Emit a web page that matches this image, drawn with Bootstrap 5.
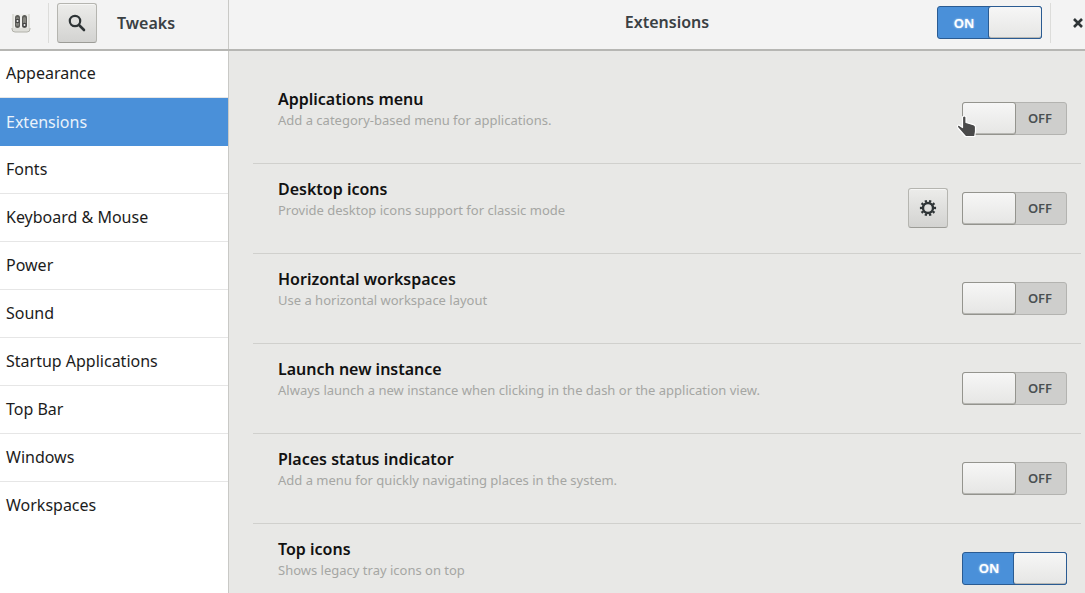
<!DOCTYPE html>
<html lang="en">
<head>
<meta charset="utf-8">
<meta name="viewport" content="width=device-width, initial-scale=1">
<title>Tweaks</title>
<link href="https://cdn.jsdelivr.net/npm/bootstrap@5.3.0/dist/css/bootstrap.min.css" rel="stylesheet">
<style>
  body { font-family: "Noto Sans", "Open Sans", sans-serif; font-size: 16px; line-height: 24px; color: #111; background: #e8e8e6; }
  .titlebar { height: 50px; background: #f3f3f3; border-bottom: 1px solid #b6b6b3; box-shadow: 0 1px 0 #b6b6b3; z-index: 1; }
  .side-col { width: 229px; border-right: 1px solid #c9c9c6; }
  .titlebar-row { padding-bottom: 4px; }
  .app-icon { width: 20px; margin: 0 17px 0 11px; }
  .win-title { font-size: 16px; font-weight: 600; color: #3a4043; }
  .page-title { padding-left: 168px; }
  .divider { width: 1px; height: 40px; background: #dcdcda; }
  .tool-btn { width: 40px; height: 40px; padding: 0; border: 1px solid #b5b5b0; border-bottom-color: #9c9c97; border-radius: 3px; background: linear-gradient(#ececea, #d3d3d1); box-shadow: inset 0 1px #f6f6f5; color: #2e3436; }
  .close-btn { color: #2e3436; }
  .side-list .list-group-item { height: 48px; padding: 11px 6px; line-height: 24px; color: #1c1c1c; border-color: #e6e6e6; }
  .side-list .list-group-item.active { background: #4a90d9; border-color: #4a90d9; color: #e9f2fb; margin-top: 0; }
  .page-pad { padding: 24px 4px 0 24px; }
  .ext-row { height: 90px; padding: 14px 14px 0 25px; border-bottom: 1px solid #d0d0cd; }
  .ext-name { font-size: 16px; font-weight: 600; line-height: 22px; color: #111; }
  .ext-desc { font-size: 13px; line-height: 20px; color: #a5a6a3; }
  .controls { gap: 14px; height: 60px; }
  .toggle { display: grid; width: 105px; height: 33px; cursor: pointer; }
  .toggle > * { grid-area: 1 / 1; }
  .toggle input { appearance: none; margin: 0; width: 105px; height: 33px; border: 1px solid #b3b3b0; border-radius: 3px; background: #cececc; position: relative; }
  .toggle input::after { content: ""; position: absolute; top: -1px; bottom: -1px; left: -1px; width: 54px; border: 1px solid #94948e; border-radius: 3px; background: linear-gradient(#f6f6f6, #e6e6e4); box-shadow: inset 0 -1px #b8b8b4; }
  .toggle input:checked { border-color: #2a5b92; background: #4a90d9; }
  .toggle input:checked::after { left: auto; right: -1px; border-color: #2a5b92; }
  .toggle .state { z-index: 1; align-self: center; pointer-events: none; width: 54px; text-align: center; font-size: 13px; font-weight: 600; line-height: 20px; }
  .state-on { display: none; justify-self: start; color: #fff; text-shadow: 0 0 2px #d5e6f8; }
  .state-off { justify-self: end; color: #4a5052; }
  .toggle input:checked ~ .state-on { display: block; }
  .toggle input:checked ~ .state-off { display: none; }
  .pointer { position: absolute; left: -6px; top: 12px; z-index: 2; pointer-events: none; }
</style>
</head>
<body class="vh-100 d-flex flex-column overflow-hidden">
<header class="titlebar d-flex flex-shrink-0 position-relative">
  <div class="side-col titlebar-row d-flex align-items-center flex-shrink-0">
    <svg class="app-icon flex-shrink-0" width="20" height="20" viewBox="0 0 20 20" aria-hidden="true">
      <path d="M1 1h18v15q0 3-3 3H4q-3 0-3-3z" fill="#deded9"/>
      <path d="M3 1h14v14H3z" fill="#efefec"/>
      <path d="M1 15v1q0 3 3 3h12q3 0 3-3v-1" fill="none" stroke="#b2b2aa"/>
      <rect x="4" y="2" width="5" height="13" rx="2.500" fill="#5c5c58"/><rect x="5" y="4" width="3" height="9" rx="1.500" fill="#85857f"/><circle cx="6.500" cy="8" r="2.200" fill="#444"/><circle cx="6.500" cy="8" r="1" fill="#eee"/>
      <rect x="11" y="2" width="5" height="13" rx="2.500" fill="#5c5c58"/><rect x="12" y="4" width="3" height="9" rx="1.500" fill="#85857f"/><circle cx="13.500" cy="12" r="2.200" fill="#444"/><circle cx="13.500" cy="12" r="1" fill="#eee"/>
    </svg>
    <span class="divider"></span>
    <button type="button" class="tool-btn ms-2 d-flex align-items-center justify-content-center" aria-label="Search">
      <svg width="18" height="18" viewBox="0 0 18 18" fill="none" stroke="currentColor"><circle cx="7" cy="7" r="5.200" stroke-width="2.200"/><path d="M11 11l5 5" stroke-width="2.600" stroke-linecap="round"/></svg>
    </button>
    <span class="win-title ms-3 ps-1">Tweaks</span>
  </div>
  <div class="titlebar-row d-flex flex-grow-1 align-items-center">
    <h1 class="win-title page-title flex-grow-1 text-center m-0">Extensions</h1>
    <label class="toggle me-2"><input type="checkbox" role="switch" checked aria-label="All extensions"><span class="state state-on">ON</span><span class="state state-off">OFF</span></label>
    <span class="divider"></span>
    <button type="button" class="close-btn border-0 bg-transparent p-0 ms-3 ps-1 d-flex" aria-label="Close">
      <svg width="14" height="12" viewBox="0 0 14 12"><path d="m3 2 8 8M11 2l-8 8" stroke="currentColor" stroke-width="2.600"/></svg>
    </button>
  </div>
</header>
<div class="d-flex flex-grow-1 overflow-hidden">
  <nav class="side-col bg-white flex-shrink-0">
    <div class="list-group list-group-flush side-list">
      <a href="#" class="list-group-item">Appearance</a>
      <a href="#" class="list-group-item active" aria-current="page">Extensions</a>
      <a href="#" class="list-group-item">Fonts</a>
      <a href="#" class="list-group-item">Keyboard &amp; Mouse</a>
      <a href="#" class="list-group-item">Power</a>
      <a href="#" class="list-group-item">Sound</a>
      <a href="#" class="list-group-item">Startup Applications</a>
      <a href="#" class="list-group-item">Top Bar</a>
      <a href="#" class="list-group-item">Windows</a>
      <a href="#" class="list-group-item">Workspaces</a>
    </div>
  </nav>
  <main class="page-pad flex-grow-1">
    <section class="ext-row d-flex justify-content-between">
      <div><div class="ext-name">Applications menu</div><div class="ext-desc">Add a category-based menu for applications.</div></div>
      <div class="controls d-flex align-items-center">
        <label class="toggle position-relative"><input type="checkbox" role="switch" aria-label="Applications menu"><span class="state state-on">ON</span><span class="state state-off">OFF</span>
          <svg class="pointer" width="22" height="24" viewBox="0 0 22 24" aria-hidden="true"><path d="M6.500 3q1.800-2 3.500 0v5.500l7.500 2.200q2 .6 2 2.300v4.500l-.8 5H9.500L2 14q-1.500-2.300.8-3l3.700 2.500z" fill="#4a4a4a" stroke="#fff" stroke-width="1.200" stroke-linejoin="round"/></svg>
        </label>
      </div>
    </section>
    <section class="ext-row d-flex justify-content-between">
      <div><div class="ext-name">Desktop icons</div><div class="ext-desc">Provide desktop icons support for classic mode</div></div>
      <div class="controls d-flex align-items-center">
        <button type="button" class="tool-btn d-flex align-items-center justify-content-center" aria-label="Desktop icons settings">
          <svg width="18" height="18" viewBox="-9 -9 18 18" fill="none" stroke="currentColor"><circle r="5" stroke-width="2.400"/><circle r="7" stroke-width="2.200" pathLength="200" stroke-dasharray="10 10" stroke-dashoffset="5"/></svg>
        </button>
        <label class="toggle"><input type="checkbox" role="switch" aria-label="Desktop icons"><span class="state state-on">ON</span><span class="state state-off">OFF</span></label>
      </div>
    </section>
    <section class="ext-row d-flex justify-content-between">
      <div><div class="ext-name">Horizontal workspaces</div><div class="ext-desc">Use a horizontal workspace layout</div></div>
      <div class="controls d-flex align-items-center"><label class="toggle"><input type="checkbox" role="switch" aria-label="Horizontal workspaces"><span class="state state-on">ON</span><span class="state state-off">OFF</span></label></div>
    </section>
    <section class="ext-row d-flex justify-content-between">
      <div><div class="ext-name">Launch new instance</div><div class="ext-desc">Always launch a new instance when clicking in the dash or the application view.</div></div>
      <div class="controls d-flex align-items-center"><label class="toggle"><input type="checkbox" role="switch" aria-label="Launch new instance"><span class="state state-on">ON</span><span class="state state-off">OFF</span></label></div>
    </section>
    <section class="ext-row d-flex justify-content-between">
      <div><div class="ext-name">Places status indicator</div><div class="ext-desc">Add a menu for quickly navigating places in the system.</div></div>
      <div class="controls d-flex align-items-center"><label class="toggle"><input type="checkbox" role="switch" aria-label="Places status indicator"><span class="state state-on">ON</span><span class="state state-off">OFF</span></label></div>
    </section>
    <section class="ext-row d-flex justify-content-between">
      <div><div class="ext-name">Top icons</div><div class="ext-desc">Shows legacy tray icons on top</div></div>
      <div class="controls d-flex align-items-center"><label class="toggle"><input type="checkbox" role="switch" checked aria-label="Top icons"><span class="state state-on">ON</span><span class="state state-off">OFF</span></label></div>
    </section>
  </main>
</div>
<script src="https://cdn.jsdelivr.net/npm/bootstrap@5.3.0/dist/js/bootstrap.bundle.min.js"></script>
</body>
</html>
